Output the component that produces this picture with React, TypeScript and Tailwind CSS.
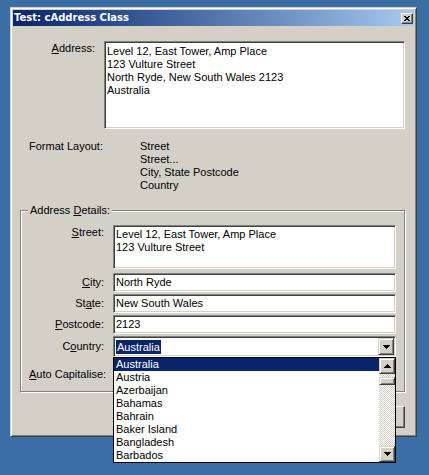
import React from "react"

const countries = ["Australia", "Austria", "Azerbaijan", "Bahamas", "Bahrain", "Baker Island", "Bangladesh", "Barbados"]

function DownArrow() {
  return (
    <svg width="7" height="4" viewBox="0 0 7 4" shapeRendering="crispEdges">
      <path d="M0 0h7v1H0zM1 1h5v1H1zM2 2h3v1H2zM3 3h1v1H3z" fill="#000" />
    </svg>
  )
}

function UpArrow() {
  return (
    <svg width="7" height="4" viewBox="0 0 7 4" shapeRendering="crispEdges">
      <path d="M3 0h1v1H3zM2 1h3v1H2zM1 2h5v1H1zM0 3h7v1H0z" fill="#000" />
    </svg>
  )
}

function Accel({ text, at }: { text: string; at: number }) {
  return (
    <span>
      {text.slice(0, at)}
      <span className="underline underline-offset-[1px]">{text[at]}</span>
      {text.slice(at + 1)}
    </span>
  )
}

function FieldRow({ label, at, value }: { label: string; at: number; value: string }) {
  return (
    <div className="flex items-center h-[19px] mt-[2px]">
      <div className="w-[83px] text-right">
        <Accel text={label} at={at} />
      </div>
      <div className="ml-[9px] w-[283px] h-[19px] bg-white border border-t-[#808080] border-l-[#808080] border-r-white border-b-white shadow-[inset_1px_1px_#404040,inset_-1px_-1px_#d4d0c8] pl-[2px] flex items-center">
        {value}
      </div>
    </div>
  )
}

export default function App() {
  return (
    <div className="w-[429px] h-[475px] bg-[#3a6ea5] pt-[7px] pl-[10px] overflow-hidden font-['Liberation_Sans',Arial,sans-serif] text-[11px] leading-[13px] text-black">
      {/* Dialog window */}
      <div className="w-[407px] h-[430px] bg-[#d4d0c8] border border-t-[#d4d0c8] border-l-[#d4d0c8] border-r-[#404040] border-b-[#404040] shadow-[inset_1px_1px_#ffffff,inset_-1px_-1px_#808080] p-[2px]">
        {/* Title bar */}
        <div className="h-[16px] flex items-center justify-between pl-[1px] pr-[1px] bg-linear-to-r from-[#0a246a] to-[#a6caf0]">
          <span className="text-white font-bold font-['DejaVu_Sans',Verdana,sans-serif] text-[10px] leading-[16px]">Test: cAddress Class</span>
          <button className="w-[12px] h-[11px] flex items-center justify-center bg-[#d4d0c8] border border-t-white border-l-white border-r-[#404040] border-b-[#404040] shadow-[inset_-1px_-1px_#808080]">
            <svg width="6" height="5" viewBox="0 0 6 5" shapeRendering="crispEdges">
              <path d="M0 0h2v1H0zM4 0h2v1H4zM1 1h4v1H1zM2 2h2v1H2zM1 3h4v1H1zM0 4h2v1H0zM4 4h2v1H4z" fill="#000" />
            </svg>
          </button>
        </div>

        {/* Address */}
        <div className="mt-[15px] flex">
          <div className="w-[82px] text-right pt-[1px]">
            <Accel text="Address:" at={0} />
          </div>
          <div className="ml-[9px] w-[301px] h-[88px] bg-white border border-t-[#808080] border-l-[#808080] border-r-white border-b-white shadow-[inset_1px_1px_#404040,inset_-1px_-1px_#d4d0c8] pl-[2px] pt-[3px]">
            <div>Level 12, East Tower, Amp Place</div>
            <div>123 Vulture Street</div>
            <div>North Ryde, New South Wales 2123</div>
            <div>Australia</div>
          </div>
        </div>

        {/* Format layout */}
        <div className="mt-[11px] flex">
          <div className="w-[127px] pl-[16px]">Format Layout:</div>
          <div>
            <div>Street</div>
            <div>Street...</div>
            <div>City, State Postcode</div>
            <div>Country</div>
          </div>
        </div>

        {/* Address Details group */}
        <div className="relative mt-[18px] ml-[7px] w-[385px] h-[182px] border border-[#808080] shadow-[inset_1px_1px_#ffffff,1px_1px_#ffffff] pt-[14px]">
          <span className="absolute -top-[7px] left-[7px] px-[2px] bg-[#d4d0c8]">
            Address <span className="underline underline-offset-[1px]">D</span>etails:
          </span>

          <div className="flex h-[44px]">
            <div className="w-[83px] text-right pt-[1px]">
              <Accel text="Street:" at={0} />
            </div>
            <div className="ml-[9px] w-[283px] h-[44px] bg-white border border-t-[#808080] border-l-[#808080] border-r-white border-b-white shadow-[inset_1px_1px_#404040,inset_-1px_-1px_#d4d0c8] pl-[2px] pt-[2px]">
              <div>Level 12, East Tower, Amp Place</div>
              <div>123 Vulture Street</div>
            </div>
          </div>

          <div className="h-[2px]" />
          <FieldRow label="City:" at={0} value="North Ryde" />
          <FieldRow label="State:" at={2} value="New South Wales" />
          <FieldRow label="Postcode:" at={0} value="2123" />

          {/* Country combo */}
          <div className="flex items-center h-[21px] mt-[2px]">
            <div className="w-[83px] text-right">
              <Accel text="Country:" at={1} />
            </div>
            <div className="relative ml-[9px] w-[283px] h-[21px]">
              <div className="w-full h-full bg-white border border-t-[#808080] border-l-[#808080] border-r-white border-b-white shadow-[inset_1px_1px_#404040,inset_-1px_-1px_#d4d0c8] p-[1px] flex items-center justify-between">
                <span className="ml-[1px] h-[14px] px-[1px] bg-[#0a246a] text-white leading-[14px]">Australia</span>
                <div className="w-[16px] h-[17px] bg-[#d4d0c8] border border-t-[#d4d0c8] border-l-[#d4d0c8] border-r-[#404040] border-b-[#404040] shadow-[inset_1px_1px_#ffffff,inset_-1px_-1px_#808080] flex items-center justify-center">
                  <DownArrow />
                </div>
              </div>

              {/* Dropdown list */}
              <div className="absolute z-10 left-0 top-full w-[283px] h-[106px] bg-white border border-black flex">
                <div className="flex-1">
                  {countries.map((c, i) => (
                    <div
                      key={c}
                      className={i === 0 ? "h-[13px] pl-[2px] bg-[#0a246a] text-white" : "h-[13px] pl-[2px]"}
                    >
                      {c}
                    </div>
                  ))}
                </div>
                <div className="w-[16px] flex flex-col">
                  <div className="h-[16px] bg-[#d4d0c8] border border-t-[#d4d0c8] border-l-[#d4d0c8] border-r-[#404040] border-b-[#404040] shadow-[inset_1px_1px_#ffffff,inset_-1px_-1px_#808080] flex items-center justify-center">
                    <UpArrow />
                  </div>
                  <div className="flex-1 pt-[3px] bg-[repeating-conic-gradient(#d4d0c8_0%_25%,#ffffff_0%_50%)] bg-[length:2px_2px]">
                    <div className="h-[8px] bg-[#d4d0c8] border border-t-[#d4d0c8] border-l-[#d4d0c8] border-r-[#404040] border-b-[#404040] shadow-[inset_1px_1px_#ffffff,inset_-1px_-1px_#808080]" />
                  </div>
                  <div className="h-[16px] bg-[#d4d0c8] border border-t-[#d4d0c8] border-l-[#d4d0c8] border-r-[#404040] border-b-[#404040] shadow-[inset_1px_1px_#ffffff,inset_-1px_-1px_#808080] flex items-center justify-center">
                    <DownArrow />
                  </div>
                </div>
              </div>
            </div>
          </div>

          {/* Auto capitalise */}
          <div className="flex items-center h-[13px] mt-[11px]">
            <div className="w-[92px] pl-[8px]">
              <Accel text="Auto Capitalise:" at={0} />
            </div>
            <div className="w-[13px] h-[13px] bg-white border border-t-[#808080] border-l-[#808080] border-r-white border-b-white shadow-[inset_1px_1px_#404040,inset_-1px_-1px_#d4d0c8]" />
          </div>
        </div>

        {/* Buttons */}
        <div className="mt-[14px] flex justify-end pr-[9px]">
          <button className="w-[75px] h-[22px] bg-[#d4d0c8] border border-t-white border-l-white border-r-[#404040] border-b-[#404040] shadow-[inset_-1px_-1px_#808080]">
            OK
          </button>
        </div>
      </div>
    </div>
  )
}
